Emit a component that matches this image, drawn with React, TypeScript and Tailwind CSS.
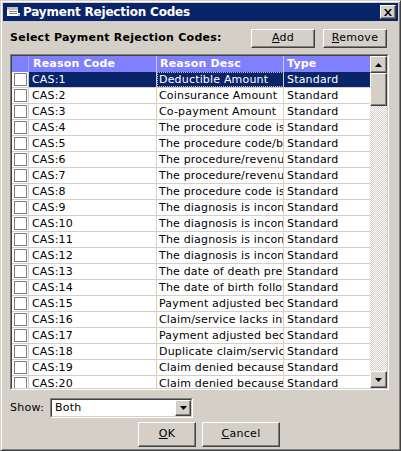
import React from "react";

const rows: [string, string][] = [
  ["CAS:1", "Deductible Amount"],
  ["CAS:2", "Coinsurance Amount"],
  ["CAS:3", "Co-payment Amount"],
  ["CAS:4", "The procedure code is inconsistent with the modifier used"],
  ["CAS:5", "The procedure code/bill type is inconsistent with the place of service"],
  ["CAS:6", "The procedure/revenue code is inconsistent with the patient's age"],
  ["CAS:7", "The procedure/revenue code is inconsistent with the patient's gender"],
  ["CAS:8", "The procedure code is inconsistent with the provider type"],
  ["CAS:9", "The diagnosis is inconsistent with the patient's age"],
  ["CAS:10", "The diagnosis is inconsistent with the patient's gender"],
  ["CAS:11", "The diagnosis is inconsistent with the procedure"],
  ["CAS:12", "The diagnosis is inconsistent with the provider type"],
  ["CAS:13", "The date of death precedes the date of service"],
  ["CAS:14", "The date of birth follows the date of service"],
  ["CAS:15", "Payment adjusted because the submitted authorization number is missing"],
  ["CAS:16", "Claim/service lacks information which is needed for adjudication"],
  ["CAS:17", "Payment adjusted because requested information was not provided"],
  ["CAS:18", "Duplicate claim/service"],
  ["CAS:19", "Claim denied because this is a work-related injury"],
  ["CAS:20", "Claim denied because this is on-the-job injury"],
];

const raised =
  "border border-t-white border-l-white border-r-[#404040] border-b-[#404040] shadow-[inset_-1px_-1px_0_#808080]";

function Btn({ children, w, h }: { children: React.ReactNode; w: string; h: string }) {
  return (
    <div className={`${w} ${h} bg-[#d4d0c8] ${raised} flex items-center justify-center text-[11px] text-black tracking-[0.3px]`}>
      {children}
    </div>
  );
}

function Arrow({ up }: { up?: boolean }) {
  return (
    <svg width="7" height="4" viewBox="0 0 7 4">
      {up ? <polygon points="3.5,0 7,4 0,4" fill="#000" /> : <polygon points="0,0 7,0 3.5,4" fill="#000" />}
    </svg>
  );
}

export default function App() {
  return (
    <div
      className="w-[401px] h-[451px] bg-[#d4d0c8] flex flex-col overflow-hidden border border-t-[#d4d0c8] border-l-[#d4d0c8] border-r-[#404040] border-b-[#404040] shadow-[inset_1px_1px_0_#fff,inset_-1px_-1px_0_#808080]"
      style={{ fontFamily: '"DejaVu Sans", Verdana, sans-serif' }}
    >
      {/* Title bar */}
      <div className="mx-[2px] mt-[2px] h-[18px] bg-[#0a246a] flex items-center pl-[3px] pr-[2px]">
        <svg width="16" height="14" viewBox="0 0 16 14" className="mr-[1px]">
          <rect x="1" y="2" width="11" height="9" fill="#fff" />
          <rect x="1" y="2" width="11" height="3" fill="#c0c0c0" />
          <rect x="3" y="6" width="8" height="1" fill="#808080" />
          <rect x="3" y="8" width="8" height="1" fill="#808080" />
          <rect x="11" y="8" width="3" height="3" fill="#fff" />
          <rect x="12" y="9" width="2" height="2" fill="#c0c0c0" />
        </svg>
        <span className="text-white font-bold text-[12px] tracking-[-0.2px] flex-1">Payment Rejection Codes</span>
        <div className={`w-[16px] h-[14px] bg-[#d4d0c8] ${raised} flex items-center justify-center`}>
          <svg width="8" height="7" viewBox="0 0 8 7">
            <path d="M0 0 L2 0 L4 2.5 L6 0 L8 0 L5 3.5 L8 7 L6 7 L4 4.5 L2 7 L0 7 L3 3.5 Z" fill="#000" />
          </svg>
        </div>
      </div>

      {/* Header line */}
      <div className="flex items-center h-[33px] pl-[9px] pr-[13px] pt-[2px]">
        <span className="font-bold text-[11px] tracking-[0.25px] text-black flex-1 -mt-[1px]">Select Payment Rejection Codes:</span>
        <Btn w="w-[64px]" h="h-[19px]">
          <span><u>A</u>dd</span>
        </Btn>
        <div className="w-[8px]" />
        <Btn w="w-[64px]" h="h-[19px]">
          <span><u>R</u>emove</span>
        </Btn>
      </div>

      {/* Grid */}
      <div className="ml-[9px] mr-[11px] h-[336px] border border-t-[#808080] border-l-[#808080] border-r-white border-b-white">
        <div className="w-full h-full border border-t-[#404040] border-l-[#404040] border-r-[#d4d0c8] border-b-[#d4d0c8] flex bg-[#d4d0c8]">
          <div className="flex-1 overflow-hidden bg-white">
            {/* Header row */}
            <div className="flex h-[16px] bg-[#8080ff] text-white font-bold text-[11px] leading-[16px] tracking-[0.2px]">
              <div className="w-[17px] border-r border-[#a0a0ff]" />
              <div className="w-[128px] border-r border-[#c8c8ff] pl-[4px]">Reason Code</div>
              <div className="w-[127px] border-r border-[#c8c8ff] pl-[3px]">Reason Desc</div>
              <div className="flex-1 pl-[3px]">Type</div>
            </div>
            {rows.map(([code, desc], i) => {
              const sel = i === 0;
              return (
                <div
                  key={code}
                  className={`flex h-[16px] text-[11px] leading-[15px] tracking-[0.18px] border-b border-[#d4d0c8] ${
                    sel ? "bg-[#0a246a] text-white" : "bg-white text-black"
                  }`}
                >
                  <div className="w-[17px] flex items-center justify-center border-r border-[#d4d0c8] bg-white">
                    <div className="w-[13px] h-[13px] border border-[#808080] bg-white" />
                  </div>
                  <div className="w-[128px] border-r border-[#d4d0c8] pl-[3px] whitespace-nowrap overflow-hidden">{code}</div>
                  <div
                    className={`w-[127px] border-r border-[#d4d0c8] pl-[2px] whitespace-nowrap overflow-hidden ${
                      sel ? "outline-1 outline-dotted outline-[#c0c0c0] -outline-offset-1" : ""
                    }`}
                  >
                    {desc}
                  </div>
                  <div className="flex-1 pl-[3px] whitespace-nowrap overflow-hidden">Standard</div>
                </div>
              );
            })}
          </div>
          {/* Scrollbar */}
          <div className="w-[17px] flex flex-col bg-[repeating-conic-gradient(#d4d0c8_0_25%,#ffffff_0_50%)] bg-[length:2px_2px]">
            <div className={`h-[17px] bg-[#d4d0c8] ${raised} flex items-center justify-center`}>
              <Arrow up />
            </div>
            <div className={`h-[33px] bg-[#d4d0c8] ${raised}`} />
            <div className="flex-1" />
            <div className={`h-[17px] bg-[#d4d0c8] ${raised} flex items-center justify-center`}>
              <Arrow />
            </div>
          </div>
        </div>
      </div>

      {/* Show */}
      <div className="flex items-center h-[20px] mt-[8px] pl-[9px]">
        <span className="text-[11px] tracking-[0.3px] text-black w-[40px]">Show:</span>
        <div className="w-[143px] h-[20px] border border-t-[#808080] border-l-[#808080] border-r-white border-b-white">
          <div className="w-full h-full border border-t-[#404040] border-l-[#404040] border-r-[#d4d0c8] border-b-[#d4d0c8] bg-white flex items-center">
            <span className="flex-1 text-[11px] tracking-[0.2px] text-black pl-[3px]">Both</span>
            <div className={`w-[16px] h-[16px] bg-[#d4d0c8] ${raised} flex items-center justify-center`}>
              <Arrow />
            </div>
          </div>
        </div>
      </div>

      {/* Buttons */}
      <div className="flex mt-[4px] pl-[137px]">
        <Btn w="w-[58px]" h="h-[25px]">
          <span><u>O</u>K</span>
        </Btn>
        <div className="w-[6px]" />
        <Btn w="w-[78px]" h="h-[25px]">
          <span><u>C</u>ancel</span>
        </Btn>
      </div>
    </div>
  );
}
